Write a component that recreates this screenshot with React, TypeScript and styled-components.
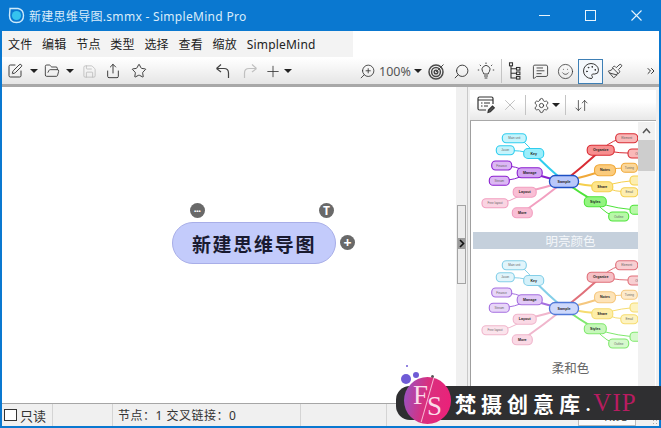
import React from 'react'
import styled, { createGlobalStyle } from 'styled-components'
import {
  ChevronsRight,
  FolderOpen,
  Paintbrush,
  Palette,
  Plus,
  Save,
  Search,
  Settings,
  Share,
  Smile,
  SquarePen,
  Star,
  X,
  ZoomIn,
  MessageSquareText,
  ArrowDownUp,
} from 'lucide-react'

const SANS = `"Noto Sans", "Noto Sans CJK SC", sans-serif`

const GlobalStyle = createGlobalStyle`
  html, body { margin: 0; padding: 0; overflow: hidden; background: #fff; }
  * { box-sizing: border-box; }
`

const Win = styled.div`
  position: relative;
  width: 661px;
  height: 428px;
  display: flex;
  flex-direction: column;
  overflow: hidden;
  background: #0a78d0;
  padding: 0 2px 2px;
  font-family: ${SANS};
`

const TitleBar = styled.div`
  height: 31px;
  display: flex;
  align-items: center;
  flex-shrink: 0;
  color: #d9ecfa;
  font-size: 12px;
`

const AppIcon = styled.svg`
  width: 17px;
  height: 17px;
  margin: 0 4px 0 6px;
  flex-shrink: 0;
`

const TitleText = styled.span`
  flex: 1;
  white-space: nowrap;
  font-size: 12px;
  letter-spacing: 0.3px;
`

const WinBtn = styled.div`
  width: 46px;
  height: 31px;
  display: flex;
  align-items: center;
  justify-content: center;
`

const MenuRow = styled.div`
  height: 27px;
  flex-shrink: 0;
  background: #fff;
`

const MenuBar = styled.div`
  width: 351px;
  height: 26px;
  background: #f3f3f3;
  display: flex;
  align-items: center;
  gap: 9.7px;
  padding-left: 6px;
  font-size: 12px;
  letter-spacing: 0.2px;
  color: #222;
`

const Toolbar = styled.div`
  height: 29px;
  flex-shrink: 0;
  display: flex;
  align-items: center;
  background: linear-gradient(#fff 0%, #f4f4f4 40%, #e6e6e6 88%, #a8a8a8 90%, #a8a8a8 100%);
  padding-bottom: 3px;
  color: #333;
`

const Tool = styled.div<{ $w?: number; $ml?: number; $dim?: boolean; $active?: boolean }>`
  width: ${({ $w }) => $w ?? 18}px;
  margin-left: ${({ $ml }) => $ml ?? 0}px;
  height: ${({ $active }) => ($active ? '25px' : '22px')};
  flex-shrink: 0;
  display: flex;
  align-items: center;
  justify-content: center;
  color: ${({ $dim }) => ($dim ? '#b5b5b5' : '#333')};
  border: ${({ $active }) => ($active ? '1px solid #3d7fb5' : 'none')};
  background: ${({ $active }) => ($active ? '#f4f8fc' : 'transparent')};
`

const Caret = styled.div<{ $ml?: number; $w?: number }>`
  width: ${({ $w }) => $w ?? 18}px;
  margin-left: ${({ $ml }) => $ml ?? 0}px;
  flex-shrink: 0;
  display: flex;
  justify-content: center;
  &::before {
    content: '';
    border-left: 4px solid transparent;
    border-right: 4px solid transparent;
    border-top: 4px solid #222;
  }
`

const ZoomText = styled.div`
  width: 34px;
  margin-left: 3px;
  flex-shrink: 0;
  font-size: 12.5px;
  color: #555;
  white-space: nowrap;
`

const Divider = styled.div<{ $ml: number; $h?: number }>`
  width: 1px;
  height: ${({ $h }) => $h ?? 24}px;
  margin-left: ${({ $ml }) => $ml}px;
  background: #c4c4c4;
  flex-shrink: 0;
`

const Main = styled.div`
  flex: 1;
  min-height: 0;
  display: flex;
  background: #f0f0f0;
`

const Canvas = styled.div`
  position: relative;
  width: 454px;
  background: #fff;
  flex-shrink: 0;
`

const TopicNode = styled.div`
  position: absolute;
  left: 170px;
  top: 135px;
  width: 164px;
  height: 42px;
  border-radius: 21px;
  background: #c3cbfb;
  border: 1px solid #a8aee8;
  display: flex;
  align-items: center;
  justify-content: center;
  font-size: 19px;
  font-weight: 700;
  letter-spacing: 1.7px;
  color: #191a30;
  font-family: "Noto Sans CJK SC", serif;
`

const Handle = styled.div<{ $x: number; $y: number; $fs: number }>`
  position: absolute;
  left: ${({ $x }) => $x}px;
  top: ${({ $y }) => $y}px;
  width: 15px;
  height: 15px;
  border-radius: 50%;
  background: #696969;
  color: #fff;
  display: flex;
  align-items: center;
  justify-content: center;
  font-size: ${({ $fs }) => $fs}px;
  font-weight: 700;
  line-height: 1;
`

const Gutter = styled.div`
  width: 12px;
  flex-shrink: 0;
  display: flex;
  align-items: center;
  padding: 0 1px;
  background: #f0f0f0;
  border-right: 1px solid #c9c9c9;
`

const Splitter = styled.div`
  width: 9px;
  height: 79px;
  margin-top: -2px;
  border: 1px solid #a4a4a4;
  background: #ececec;
  display: flex;
  align-items: center;
  justify-content: center;
`

const SplitArrow = styled.div`
  width: 7px;
  height: 11px;
  margin-top: -1px;
  background: #9c9c9c;
  display: flex;
  align-items: center;
  justify-content: center;
`

const Panel = styled.div`
  flex: 1;
  display: flex;
  flex-direction: column;
  min-width: 0;
  padding: 3px 3px 0 2px;
`

const PanelBar = styled.div`
  height: 31px;
  flex-shrink: 0;
  display: flex;
  align-items: center;
  padding-left: 6px;
  background: linear-gradient(#fff, #fff 40%, #e8e8e8);
  color: #333;
  border-bottom: 1px solid #a8a8a8;
`

const GalleryWrap = styled.div`
  flex: 1;
  min-height: 0;
  display: flex;
  background: #fff;
  border-left: 1px solid #9f9f9f;
  padding-left: 2px;
  padding-top: 1px;
`

const Gallery = styled.div`
  width: 165px;
  overflow: hidden;
  flex-shrink: 0;
`

const Theme = styled.div`
  width: 195px;
  height: 127px;
`

const ThemeLabel = styled.div<{ $selected?: boolean }>`
  height: 17px;
  display: flex;
  align-items: center;
  justify-content: center;
  font-size: 12.5px;
  background: ${({ $selected }) => ($selected ? '#c5d0dc' : 'transparent')};
  color: ${({ $selected }) => ($selected ? '#f4f7fa' : '#666')};
`

const Scrollbar = styled.div`
  width: 17px;
  flex-shrink: 0;
  background: #f1f1f1;
  display: flex;
  flex-direction: column;
  align-items: center;
`

const ScrollUp = styled.div`
  height: 18px;
  display: flex;
  align-items: center;
  justify-content: center;
`

const ScrollThumb = styled.div`
  width: 17px;
  height: 31px;
  background: #cdcdcd;
`

const StatusBar = styled.div`
  position: relative;
  height: 23px;
  flex-shrink: 0;
  display: flex;
  align-items: center;
  background: #f0f0f0;
  border-top: 1px solid #a6a6a6;
  font-size: 12px;
  color: #333;
`

const StatusCell = styled.div<{ $w: number }>`
  width: ${({ $w }) => $w}px;
  height: 100%;
  flex-shrink: 0;
  display: flex;
  align-items: center;
  gap: 3px;
  padding-left: 2px;
  border-right: 1px solid #d4d4d4;
  white-space: nowrap;
`

const ReadOnly = styled.span`
  font-size: 13px;
`

const Counts = styled.span`
  padding-left: 3px;
  letter-spacing: 0.5px;
`

const Check = styled.div`
  width: 13px;
  height: 12px;
  border: 1px solid #333;
  background: #fff;
`

const OverviewBtn = styled.div`
  width: 58px;
  height: 100%;
  margin-left: 191px;
  flex-shrink: 0;
  background: #fbfbfb;
  border: 1px solid #bbb;
  display: flex;
  align-items: center;
  justify-content: center;
  gap: 3px;
  font-size: 12px;
`

const Grip = styled.div`
  position: absolute;
  right: 1px;
  bottom: 1px;
  width: 6px;
  height: 6px;
  background-image: radial-gradient(#a8a8a8 1px, transparent 1px);
  background-size: 3px 3px;
`

const WatermarkBand = styled.div`
  position: absolute;
  left: 396px;
  top: 386px;
  width: 265px;
  height: 34px;
  background: #2f2f31;
  border-radius: 14px 0 0 14px;
  display: flex;
  align-items: center;
  padding-left: 59px;
  color: #fff;
`

const WatermarkCn = styled.span`
  font-family: "Noto Sans CJK SC", sans-serif;
  font-size: 21px;
  font-weight: 700;
  letter-spacing: 5px;
  white-space: nowrap;
`

const WatermarkVip = styled.span`
  font-family: "Liberation Serif", serif;
  font-size: 25px;
  letter-spacing: 1.1px;
  color: #b81c60;
`

const WatermarkDot = styled.span`
  font-family: "Liberation Serif", serif;
  font-size: 25px;
  margin-right: 2px;
`

const Badge = styled.div`
  position: absolute;
  left: 404px;
  top: 377px;
  width: 47px;
  height: 47px;
  border-radius: 50%;
  background: linear-gradient(100deg, #9455c8 0%, #d8307f 45%, #ee1f78 100%);
  color: #fbdcea;
  font-family: "Liberation Serif", serif;
  font-size: 27px;
  display: flex;
  align-items: center;
  justify-content: center;
`

const BadgeF = styled.span`
  margin-top: -11px;
  margin-right: -1px;
`

const BadgeS = styled.span`
  margin-top: 11px;
`

const BadgeSlash = styled.div`
  position: absolute;
  left: 23px;
  top: 0;
  width: 1px;
  height: 46px;
  background: #f9b6d4;
  transform: rotate(16deg);
`

const Dot = styled.div<{ $x: number; $y: number; $r: number; $c?: string }>`
  position: absolute;
  left: ${({ $x, $r }) => $x - $r}px;
  top: ${({ $y, $r }) => $y - $r}px;
  width: ${({ $r }) => $r * 2}px;
  height: ${({ $r }) => $r * 2}px;
  border-radius: 50%;
  background: ${({ $c }) => $c ?? '#6f5bd6'};
`

type Branch = 'key' | 'manage' | 'layout' | 'org' | 'notes' | 'share' | 'styles'
type Colors = Record<Branch | 'root', { line: string; fill: string; leaf: string }>

const BRIGHT: Colors = {
  root: { line: '#1d4fc4', fill: '#b9c8fa', leaf: '#fff' },
  key: { line: '#2fcdee', fill: '#9aeefb', leaf: '#c6f4fc' },
  manage: { line: '#8a1fd0', fill: '#d3a6f2', leaf: '#dcb8f4' },
  layout: { line: '#f29fc0', fill: '#f9bfd5', leaf: '#fad4e2' },
  org: { line: '#d92c34', fill: '#f78f8f', leaf: '#f9b8b8' },
  notes: { line: '#f0a838', fill: '#fbcb7c', leaf: '#fbd79a' },
  share: { line: '#f5cf4c', fill: '#fde58a', leaf: '#fdeeb0' },
  styles: { line: '#4ee43a', fill: '#93f480', leaf: '#b8f8a8' },
}

const SOFT: Colors = {
  root: { line: '#4f78d8', fill: '#cdd8fb', leaf: '#fff' },
  key: { line: '#84cfe8', fill: '#d4f1fa', leaf: '#e2f5fb' },
  manage: { line: '#a56fe0', fill: '#e2caf7', leaf: '#e8d6f8' },
  layout: { line: '#f0b6cc', fill: '#fad9e5', leaf: '#fbe4ec' },
  org: { line: '#e0707a', fill: '#f6c0c5', leaf: '#f8cfd2' },
  notes: { line: '#f5c77e', fill: '#fde3b8', leaf: '#fdeacb' },
  share: { line: '#f6dc70', fill: '#fdeea8', leaf: '#fdf3c0' },
  styles: { line: '#80e86e', fill: '#c6f7ba', leaf: '#d6f9cd' },
}

const NODES: { x: number; y: number; w: number; h: number; t: string; b: Branch; main?: boolean; fx: number; fy: number }[] = [
  { x: 60.7, y: 32, w: 20, h: 10, t: 'Key', b: 'key', main: true, fx: 91, fy: 60 },
  { x: 41.3, y: 16.7, w: 24, h: 9, t: 'Main unit', b: 'key', fx: 60.7, fy: 32 },
  { x: 32.3, y: 28.7, w: 18, h: 9, t: 'Jason', b: 'key', fx: 60.7, fy: 32 },
  { x: 56.7, y: 51.3, w: 25, h: 10, t: 'Manage', b: 'manage', main: true, fx: 91, fy: 60 },
  { x: 28.7, y: 44, w: 20, h: 9, t: 'Finance', b: 'manage', fx: 56.7, fy: 51.3 },
  { x: 26.3, y: 59.3, w: 20, h: 9, t: 'Stream', b: 'manage', fx: 56.7, fy: 51.3 },
  { x: 51.7, y: 70.7, w: 23, h: 10, t: 'Layout', b: 'layout', main: true, fx: 91, fy: 60 },
  { x: 22, y: 81.7, w: 26, h: 9, t: 'Free layout', b: 'layout', fx: 51.7, fy: 70.7 },
  { x: 49.3, y: 91.3, w: 20, h: 10, t: 'More', b: 'layout', main: true, fx: 91, fy: 60 },
  { x: 127.7, y: 28.7, w: 27, h: 10, t: 'Organize', b: 'org', main: true, fx: 91, fy: 60 },
  { x: 153.7, y: 16.7, w: 22, h: 9, t: 'Element', b: 'org', fx: 127.7, fy: 28.7 },
  { x: 166, y: 32, w: 22, h: 9, t: 'Other', b: 'org', fx: 127.7, fy: 28.7 },
  { x: 132, y: 48.7, w: 21, h: 11, t: 'Notes', b: 'notes', main: true, fx: 91, fy: 60 },
  { x: 156.3, y: 46.3, w: 16, h: 9, t: 'Tuning', b: 'notes', fx: 132, fy: 48.7 },
  { x: 129.3, y: 65.3, w: 21, h: 10, t: 'Share', b: 'share', main: true, fx: 91, fy: 60 },
  { x: 168, y: 59, w: 22, h: 9, t: 'Mail', b: 'share', fx: 129.3, fy: 65.3 },
  { x: 156.3, y: 70.7, w: 17, h: 9, t: 'Email', b: 'share', fx: 129.3, fy: 65.3 },
  { x: 122.3, y: 80.3, w: 22, h: 10, t: 'Styles', b: 'styles', main: true, fx: 91, fy: 60 },
  { x: 168, y: 88.3, w: 22, h: 9, t: 'Link', b: 'styles', fx: 122.3, fy: 80.3 },
  { x: 145.7, y: 95, w: 20, h: 9, t: 'Outline', b: 'styles', fx: 122.3, fy: 80.3 },
]

const branchPath = (n: (typeof NODES)[number]) =>
  n.main
    ? `M${n.fx} ${n.fy} Q${(n.fx + n.x) / 2} ${(n.fy + n.y) / 2 + 1} ${n.x} ${n.y}`
    : `M${n.fx} ${n.fy} Q${(n.fx + n.x) / 2} ${n.y} ${n.x} ${n.y}`

const MindMap = ({ colors }: { colors: Colors }) => (
  <svg width="195" height="110" viewBox="0 0.5 195 110" style={{ display: 'block' }}>
    {NODES.map((n) => (
      <path key={`l-${n.t}`} d={branchPath(n)} fill="none" stroke={colors[n.b].line} strokeWidth={n.main ? 2 : 1} />
    ))}
    {NODES.map((n) => (
      <g key={n.t}>
        <rect
          x={n.x - n.w / 2}
          y={n.y - n.h / 2}
          width={n.w}
          height={n.h}
          rx={n.h / 2.3}
          fill={n.main ? colors[n.b].fill : colors[n.b].leaf}
          stroke={colors[n.b].line}
          strokeWidth={1.1}
        />
        <text
          x={n.x}
          y={n.y + 1.1}
          textAnchor="middle"
          fontSize={n.main ? 3.6 : 3}
          fontWeight={n.main ? 700 : 400}
          fill={n.main ? '#222' : '#666'}
          fontFamily="Liberation Sans, sans-serif"
        >
          {n.t}
        </text>
      </g>
    ))}
    <rect x="76.5" y="54" width="29" height="12" rx="5.5" fill={colors.root.fill} stroke={colors.root.line} strokeWidth="1.3" />
    <text x="91" y="61.2" textAnchor="middle" fontSize="3.6" fill="#222" fontWeight="700" fontFamily="Liberation Sans, sans-serif">
      Sample
    </text>
  </svg>
)

const UndoIcon = ({ flip, color }: { flip?: boolean; color: string }) => (
  <svg width="16" height="16" viewBox="0 0 16 16" fill="none" stroke={color} strokeWidth="1.2" style={flip ? { transform: 'scaleX(-1)' } : undefined}>
    <path d="M1.5 5.5 L6 1.5 M1.5 5.5 L6 9 M1.5 5.5 H9 Q13.5 5.5 13.5 10 V15" />
  </svg>
)

const TargetIcon = () => (
  <svg width="17" height="17" viewBox="0 0 17 17" fill="none" stroke="#4a4a4a" strokeWidth="1.5">
    <circle cx="8" cy="9" r="7" />
    <circle cx="8" cy="9" r="4.4" />
    <circle cx="8" cy="9" r="1.8" />
    <path d="M8 9 L15.5 1.5" strokeWidth="1" />
  </svg>
)

const BulbIcon = () => (
  <svg width="18" height="18" viewBox="0 0 18 18" fill="none" stroke="#444" strokeWidth="1">
    <path d="M6.8 12 Q6.6 10.6 5.6 9.6 A4 4 0 1 1 12.4 9.6 Q11.4 10.6 11.2 12 Z" />
    <path d="M7 14 H11 M7.6 16 H10.4" strokeWidth="1.2" />
    <path d="M9 .5 V2 M2.8 2.8 L3.9 3.9 M15.2 2.8 L14.1 3.9 M.8 8 H2.2 M15.8 8 H17.2" />
  </svg>
)

const TreeIcon = () => (
  <svg width="14" height="18" viewBox="0 0 14 18" fill="none" stroke="#333" strokeWidth="1.1">
    <rect x="1.5" y="0.8" width="3" height="3" />
    <rect x="8.5" y="5.5" width="3.4" height="2.6" />
    <rect x="8.5" y="10" width="3.4" height="2.6" />
    <rect x="8.5" y="14.5" width="3.4" height="2.6" />
    <path d="M3 4 V16 H8.5 M3 6.8 H8.5 M3 11.3 H8.5" />
  </svg>
)

const NoteEditIcon = () => (
  <svg width="18" height="18" viewBox="0 0 18 18" fill="none" stroke="#333" strokeWidth="1.2">
    <path d="M9 14 H2.5 Q1 14 1 12.5 V2.5 Q1 1 2.5 1 H14.5 Q16 1 16 2.5 V8" />
    <path d="M1 4 H16 M4 7 H5.5 M7 7 H13 M4 10 H5.5 M7 10 H11" />
    <path d="M11 16.5 L11.5 14 L15.5 10 L17.3 11.8 L13.3 15.8 Z" fill="#555" />
  </svg>
)

const Watermark = () => (
  <>
    <WatermarkBand>
      <WatermarkCn>梵摄创意库</WatermarkCn>
      <WatermarkDot>.</WatermarkDot>
      <WatermarkVip>VIP</WatermarkVip>
    </WatermarkBand>
    <Dot $x={406} $y={379} $r={5} />
    <Dot $x={416} $y={375} $r={3} />
    <Dot $x={407} $y={366} $r={1.3} />
    <Dot $x={432} $y={376} $r={1.5} $c="#555" />
    <Badge>
      <BadgeF>F</BadgeF>
      <BadgeSlash />
      <BadgeS>S</BadgeS>
    </Badge>
  </>
)

const MENUS = ['文件', '编辑', '节点', '类型', '选择', '查看', '缩放', 'SimpleMind']

export default function App() {
  return (
    <Win>
      <GlobalStyle />
      <TitleBar>
        <AppIcon viewBox="0 0 17 17">
          <path d="M2 1.5 H10 Q15.5 2.5 15.5 8.5 Q15.5 15.5 8.5 15.5 Q1.5 15.5 1.5 8.5 Z" fill="none" stroke="#cfeafa" strokeWidth="1.4" />
          <circle cx="8.5" cy="8.5" r="4.6" fill="#35c3ee" />
        </AppIcon>
        <TitleText>新建思维导图.smmx - SimpleMind Pro</TitleText>
        <WinBtn>
          <svg width="11" height="11" viewBox="0 0 11 11" stroke="#e8f4fc" strokeWidth="1">
            <path d="M0 5.5 H11" />
          </svg>
        </WinBtn>
        <WinBtn>
          <svg width="11" height="11" viewBox="0 0 11 11" fill="none" stroke="#e8f4fc" strokeWidth="1">
            <rect x="0.5" y="0.5" width="10" height="10" />
          </svg>
        </WinBtn>
        <WinBtn>
          <svg width="11" height="11" viewBox="0 0 11 11" stroke="#e8f4fc" strokeWidth="1.1">
            <path d="M0.5 0.5 L10.5 10.5 M10.5 0.5 L0.5 10.5" />
          </svg>
        </WinBtn>
      </TitleBar>

      <MenuRow>
        <MenuBar>
          {MENUS.map((m) => (
            <span key={m}>{m}</span>
          ))}
        </MenuBar>
      </MenuRow>

      <Toolbar>
        <Tool $ml={4}><SquarePen size={16} strokeWidth={1.4} /></Tool>
        <Caret $w={18} $ml={1} />
        <Tool><FolderOpen size={16} strokeWidth={1.3} /></Tool>
        <Caret />
        <Tool $ml={1} $dim><Save size={15} strokeWidth={1.2} /></Tool>
        <Tool $ml={6}><Share size={16} strokeWidth={1.4} /></Tool>
        <Tool $ml={8}><Star size={16} strokeWidth={1.4} /></Tool>
        <Tool $ml={66}><UndoIcon color="#444" /></Tool>
        <Tool $ml={9}><UndoIcon flip color="#c0c0c0" /></Tool>
        <Tool $ml={5}><Plus size={19} strokeWidth={1.1} /></Tool>
        <Caret $w={12} />
        <Tool $ml={64}><ZoomIn size={17} strokeWidth={1.2} style={{ transform: 'scaleX(-1)' }} /></Tool>
        <ZoomText>100%</ZoomText>
        <Caret $w={10} />
        <Tool $ml={4}><TargetIcon /></Tool>
        <Tool $ml={7}><Search size={17} strokeWidth={1.3} style={{ transform: 'scaleX(-1)' }} /></Tool>
        <Tool $ml={7}><BulbIcon /></Tool>
        <Divider $ml={6} />
        <Tool $ml={4}><TreeIcon /></Tool>
        <Tool $ml={7}><MessageSquareText size={17} strokeWidth={1.2} /></Tool>
        <Tool $ml={7}><Smile size={17} strokeWidth={1.1} /></Tool>
        <Tool $w={25} $ml={4} $active><Palette size={18} strokeWidth={1.3} /></Tool>
        <Tool $ml={3}><Paintbrush size={16} strokeWidth={1.3} /></Tool>
        <Tool $ml={18}><ChevronsRight size={12} strokeWidth={2} /></Tool>
      </Toolbar>

      <Main>
        <Canvas>
          <TopicNode>新建思维导图</TopicNode>
          <Handle $x={188} $y={116} $fs={6}>•••</Handle>
          <Handle $x={317} $y={116} $fs={12}>T</Handle>
          <Handle $x={338} $y={148} $fs={14}>+</Handle>
        </Canvas>
        <Gutter>
          <Splitter>
            <SplitArrow>
              <svg width="6" height="9" viewBox="0 0 6 9" fill="none" stroke="#111" strokeWidth="1.6">
                <path d="M1 1 L4.5 4.5 L1 8" />
              </svg>
            </SplitArrow>
          </Splitter>
        </Gutter>
        <Panel>
          <PanelBar>
            <Tool $w={20}><NoteEditIcon /></Tool>
            <Tool $ml={5} $dim><X size={18} strokeWidth={1.1} /></Tool>
            <Divider $ml={6} $h={20} />
            <Tool $ml={6}><Settings size={17} strokeWidth={1.2} /></Tool>
            <Caret $w={11} />
            <Divider $ml={4} $h={20} />
            <Tool $ml={6}><ArrowDownUp size={15} strokeWidth={1.2} /></Tool>
          </PanelBar>
          <GalleryWrap>
            <Gallery>
              <Theme>
                <MindMap colors={BRIGHT} />
                <ThemeLabel $selected>明亮颜色</ThemeLabel>
              </Theme>
              <Theme>
                <MindMap colors={SOFT} />
                <ThemeLabel>柔和色</ThemeLabel>
              </Theme>
            </Gallery>
            <Scrollbar>
              <ScrollUp>
                <svg width="9" height="6" viewBox="0 0 9 6" fill="none" stroke="#555" strokeWidth="1.5">
                  <path d="M1 5 L4.5 1 L8 5" />
                </svg>
              </ScrollUp>
              <ScrollThumb />
            </Scrollbar>
          </GalleryWrap>
        </Panel>
      </Main>

      <StatusBar>
        <StatusCell $w={51}><Check /><ReadOnly>只读</ReadOnly></StatusCell>
        <StatusCell $w={60} />
        <StatusCell $w={188}><Counts>节点：1 交叉链接：0</Counts></StatusCell>
        <StatusCell $w={86} />
        <OverviewBtn>
          <svg width="14" height="12" viewBox="0 0 14 12" fill="none" stroke="#333" strokeWidth="1">
            <circle cx="4" cy="4" r="3.4" />
            <circle cx="10" cy="8" r="2.6" />
          </svg>
          概览
        </OverviewBtn>
        <Grip />
      </StatusBar>

      <Watermark />
    </Win>
  )
}
